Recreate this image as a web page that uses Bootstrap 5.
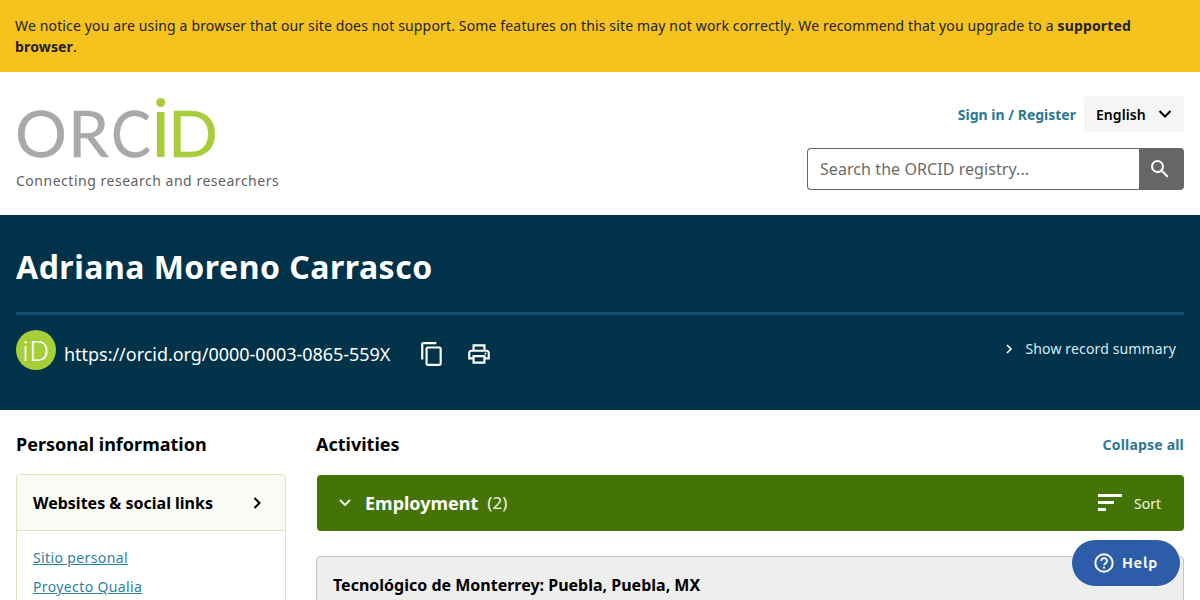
<!DOCTYPE html>
<html lang="en">
<head>
<meta charset="utf-8">
<title>ORCID</title>
<link href="https://cdn.jsdelivr.net/npm/bootstrap@5.3.0/dist/css/bootstrap.min.css" rel="stylesheet">
<style>
html,body{height:600px;overflow:hidden}
body{font-family:"Noto Sans",sans-serif;color:#000;background:#fff}
.notice-bar{background:#f6c31e;color:#222;font-size:14px;line-height:21px;padding:15px;height:72px;letter-spacing:.15px}
.notice-bar b{font-weight:700}
.site-head{height:143px;padding:24px 16px 0}
.logo-box{width:210px;height:64px;display:block;overflow:visible}
.logo-box text{font-family:Lato,sans-serif;font-size:64px;stroke-width:.4px}
.logo-grey{fill:#a7a9ac;stroke:#a7a9ac}
.logo-green{fill:#a6ce39;stroke:#a6ce39}
.tagline{font-size:14px;letter-spacing:.52px;color:#5f5f5f;line-height:20px;margin-top:11px}
.auth-link{font-size:14px;font-weight:700;color:#2b7895;text-decoration:none}
.lang-btn{width:100px;height:36px;background:#f5f5f5;border:0;border-radius:4px;font-size:14px;font-weight:600;letter-spacing:.05px;color:#000;padding:0 12px}
.search-wrap{width:377px;height:42px;margin-top:16px}
.search-input{flex:1;border:1px solid #666;border-right:0;border-radius:4px 0 0 4px;padding:0 12px;font-size:16px;font-family:inherit;letter-spacing:.07px;color:#666;min-width:0}
.search-input::placeholder{color:#6b6b6b;opacity:1}
.search-btn{width:45px;background:#666;border:0;border-radius:0 4px 4px 0;padding:0 4px 0 0}
.record-band{background:#00324a;height:195px;padding:0 16px;color:#fff}
.record-name{height:100px;border-bottom:3px solid #0e4f70;margin:0;font-size:32px;font-weight:700;letter-spacing:.5px;line-height:104px}
.record-row{padding-top:15px}
.id-badge{width:40px;height:40px;flex:none;border-radius:50%;background:#a6ce39;color:#fff;font-size:28px;line-height:40px;text-align:center;font-weight:300;letter-spacing:.5px}
.url-line{padding-top:11px}
.orcid-url{font-size:18px;line-height:24px;margin-left:8px;letter-spacing:-.03px}
.copy-icon{margin-left:29px}
.print-icon{margin-left:21px}
.summary-link{font-size:14px;color:#d3ecf6;letter-spacing:.14px;padding-right:8px;padding-top:8px}
.summary-chev{margin-right:13px}
.main-area{padding:0 16px;gap:30px;display:flex}
.side-col{width:270px;flex:none}
.act-col{flex:1;min-width:0}
.sec-title{height:64px;font-size:18px;font-weight:700;line-height:24px;padding-top:22px}
.side-card{border:1px solid #dfe3b4;border-radius:4px;overflow:hidden}
.side-card-head{height:56px;background:#fbfbf6;border-bottom:1px solid #dfe3b4;padding:0 23px 0 16px;font-size:16px;font-weight:700}
.side-card-body{padding:12px 16px;font-size:14px;letter-spacing:.38px;line-height:29px}
.side-card-body a{color:#2e7f9f;display:block}
.collapse-link{font-size:14px;font-weight:700;color:#2b7895;text-decoration:none;letter-spacing:.2px;line-height:25px}
.section-bar{height:56px;margin:1px 0 0 1px;background:#447405;border-radius:4px;color:#fff;padding:0 23px 0 20px}
.bar-chev{margin-right:12px}
.bar-title{font-size:18px;font-weight:700}
.bar-count{font-size:17px;margin-left:9px;color:#f2f6ea}
.bar-sort{font-size:14px;color:#f2f6ea}
.sort-icon{margin-right:11px}
.employ-card{margin-top:25px;height:120px;background:#eee;border:1px solid #c4c4c4;border-radius:4px 4px 0 0;padding:17px 16px;font-size:16px;font-weight:700;line-height:22px}
.help-pill{position:fixed;left:1072px;top:540px;width:108px;height:46px;border-radius:23px;background:#2d5ca8;color:#fff;border:0;font-family:Ubuntu,"Noto Sans",sans-serif;font-size:15px;font-weight:700;letter-spacing:.8px;padding:0}
</style>
</head>
<body>
<div class="notice-bar">We notice you are using a browser that our site does not support. Some features on this site may not work correctly. We recommend that you upgrade to a <b>supported browser</b>.</div>

<header class="site-head d-flex justify-content-between">
  <div>
    <svg class="logo-box" viewBox="0 0 210 64" role="img" aria-label="ORCID">
      <text class="logo-grey" x="-1" y="61" textLength="52" lengthAdjust="spacingAndGlyphs">O</text>
      <text class="logo-grey" x="52" y="61" textLength="41" lengthAdjust="spacingAndGlyphs">R</text>
      <text class="logo-grey" x="95" y="61" textLength="40" lengthAdjust="spacingAndGlyphs">C</text>
      <rect x="141" y="16" width="7.500" height="45" fill="#a6ce39"/>
      <circle cx="144.700" cy="6.500" r="4.500" fill="#a6ce39"/>
      <text class="logo-green" x="152" y="61" textLength="50" lengthAdjust="spacingAndGlyphs">D</text>
    </svg>
    <div class="tagline">Connecting research and researchers</div>
  </div>
  <div class="d-flex flex-column align-items-end">
    <div class="d-flex align-items-center gap-2">
      <a class="auth-link" href="#">Sign in / Register</a>
      <button class="lang-btn d-flex align-items-center justify-content-between">English
        <svg width="14" height="10" viewBox="0 0 14 10"><path d="M1.500 2l5.500 5.500L12.500 2" fill="none" stroke="#000" stroke-width="2"/></svg>
      </button>
    </div>
    <div class="search-wrap d-flex">
      <input class="search-input" placeholder="Search the ORCID registry...">
      <button class="search-btn d-flex align-items-center justify-content-center" aria-label="Search">
        <svg width="24" height="24" viewBox="0 0 24 24" fill="#fff"><path d="M15.500 14h-.79l-.28-.27A6.470 6.470 0 0 0 16 9.500 6.500 6.500 0 1 0 9.500 16c1.610 0 3.090-.59 4.230-1.570l.27.28v.79l5 4.990L20.490 19l-4.990-5zm-6 0C7.010 14 5 11.990 5 9.500S7.010 5 9.500 5 14 7.010 14 9.500 11.990 14 9.500 14z"/></svg>
      </button>
    </div>
  </div>
</header>

<section class="record-band">
  <h1 class="record-name">Adriana Moreno Carrasco</h1>
  <div class="record-row d-flex justify-content-between align-items-start">
    <div class="d-flex align-items-start">
      <div class="id-badge">iD</div>
      <div class="url-line d-flex align-items-center">
        <span class="orcid-url">https://orcid.org/0000-0003-0865-559X</span>
        <svg class="copy-icon" width="26" height="26" viewBox="0 0 24 24" fill="#fff"><path d="M16 1H4c-1.100 0-2 .9-2 2v14h2V3h12V1zm3 4H8c-1.100 0-2 .9-2 2v14c0 1.100.9 2 2 2h11c1.100 0 2-.9 2-2V7c0-1.100-.9-2-2-2zm0 16H8V7h11v14z"/></svg>
        <svg class="print-icon" width="26" height="26" viewBox="0 0 24 24" fill="#fff"><path d="M19 8h-1V3H6v5H5c-1.660 0-3 1.340-3 3v6h4v4h12v-4h4v-6c0-1.660-1.340-3-3-3zM8 5h8v3H8V5zm8 14H8v-4h8v4zm2-4v-2H6v2H4v-4c0-.55.45-1 1-1h14c.55 0 1 .45 1 1v4h-2z"/><circle cx="18" cy="11.500" r="1"/></svg>
      </div>
    </div>
    <div class="summary-link d-flex align-items-center">
      <svg class="summary-chev" width="8" height="12" viewBox="0 0 8 12"><path d="M2 2l4 4-4 4" fill="none" stroke="#fff" stroke-width="1.600"/></svg>
      Show record summary
    </div>
  </div>
</section>

<main class="main-area">
  <aside class="side-col">
    <div class="sec-title">Personal information</div>
    <div class="side-card">
      <div class="side-card-head d-flex align-items-center justify-content-between">Websites &amp; social links
        <svg width="10" height="14" viewBox="0 0 10 14"><path d="M2.500 2l5 5-5 5" fill="none" stroke="#000" stroke-width="2"/></svg>
      </div>
      <div class="side-card-body">
        <a href="#">Sitio personal</a>
        <a href="#">Proyecto Qualia</a>
      </div>
    </div>
  </aside>
  <div class="act-col">
    <div class="sec-title d-flex justify-content-between">Activities <a class="collapse-link" href="#">Collapse all</a></div>
    <div class="section-bar d-flex align-items-center justify-content-between">
      <div class="d-flex align-items-center">
        <svg class="bar-chev" width="16" height="10" viewBox="0 0 16 10"><path d="M3 2l5 5 5-5" fill="none" stroke="#fff" stroke-width="1.800"/></svg>
        <span class="bar-title">Employment</span><span class="bar-count">(2)</span>
      </div>
      <div class="d-flex align-items-center bar-sort">
        <svg class="sort-icon" width="26" height="18" viewBox="0 0 26 18" fill="#fff"><rect x="1" y="0" width="24" height="3"/><rect x="1" y="7" width="16" height="3"/><rect x="1" y="14" width="8" height="3"/></svg>
        Sort
      </div>
    </div>
    <div class="employ-card">Tecnológico de Monterrey: Puebla, Puebla, MX</div>
  </div>
</main>

<button class="help-pill d-flex align-items-center justify-content-center gap-2">
  <svg width="20" height="20" viewBox="0 0 20 20"><circle cx="10" cy="10" r="8.700" fill="none" stroke="#fff" stroke-width="2"/><path d="M7.300 8a2.800 2.800 0 1 1 4.200 2.300c-1 .6-1.400 1-1.400 2" fill="none" stroke="#fff" stroke-width="1.800"/><circle cx="10" cy="14.700" r="1.100" fill="#fff"/></svg>
  Help
</button>
</body>
</html>
